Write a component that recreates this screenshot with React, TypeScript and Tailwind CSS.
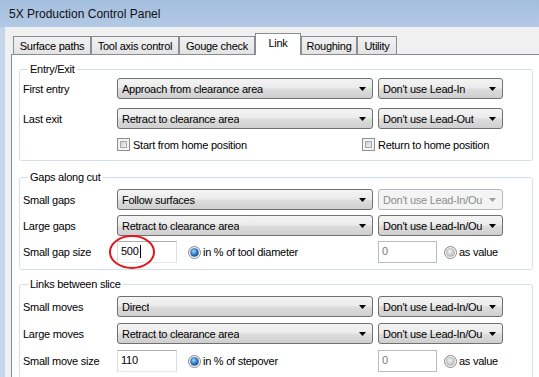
import React from "react";

const F = "font-['Liberation_Sans',Arial,sans-serif] text-[11px] tracking-[-0.25px] leading-[14px] text-black";

function Arrow({ disabled = false }: { disabled?: boolean }) {
  return (
    <svg width="7" height="4" viewBox="0 0 7 4" className="shrink-0">
      <polygon points="0,0 7,0 3.5,4" fill={disabled ? "#a0a0a0" : "#000"} />
    </svg>
  );
}

function Select({ text, w, disabled = false, clip = false }: { text: string; w: string; disabled?: boolean; clip?: boolean }) {
  return (
    <div
      className={
        disabled
          ? `${w} h-[21px] flex items-center justify-between pl-[4px] pr-[6px] rounded-[3px] border border-[#b5b8bc] bg-[#f4f4f4] text-[#8d8d8d] overflow-hidden whitespace-nowrap`
          : `${w} h-[21px] flex items-center justify-between pl-[4px] pr-[6px] rounded-[3px] border border-[#707070] bg-[linear-gradient(#f4f4f4_0%,#ebebeb_48%,#dddddd_52%,#cfcfcf_100%)] overflow-hidden whitespace-nowrap`
      }
    >
      <span className={clip ? "w-[99px] overflow-hidden whitespace-nowrap" : "overflow-hidden"}>{text}</span>
      <Arrow disabled={disabled} />
    </div>
  );
}

function Checkbox() {
  return (
    <div className="w-[13px] h-[13px] border border-[#8e8f8f] bg-[#f4f4f4] p-[2px] shrink-0">
      <div className="w-full h-full border border-[#a7a9ac] bg-[linear-gradient(135deg,#c9ccd1_0%,#e4e5e7_60%,#f3f3f3_100%)]" />
    </div>
  );
}

function Radio({ on }: { on: boolean }) {
  return (
    <svg width="13" height="13" viewBox="0 0 13 13" className="shrink-0">
      <defs>
        <linearGradient id="rg_outer" x1="0" y1="0" x2="1" y2="1">
          <stop offset="0" stopColor="#e8e8e8" />
          <stop offset="1" stopColor="#ffffff" />
        </linearGradient>
        <radialGradient id="rg_on" cx="0.4" cy="0.35" r="0.7">
          <stop offset="0" stopColor="#a9e0ff" />
          <stop offset="0.5" stopColor="#3b8ad6" />
          <stop offset="1" stopColor="#14428a" />
        </radialGradient>
        <radialGradient id="rg_off" cx="0.4" cy="0.35" r="0.7">
          <stop offset="0" stopColor="#f4f4f4" />
          <stop offset="1" stopColor="#b8b8b8" />
        </radialGradient>
      </defs>
      <circle cx="6.5" cy="6.5" r="6" fill="url(#rg_outer)" stroke="#8a8a8a" strokeWidth="1" />
      <circle cx="6.5" cy="6.5" r="4" fill={on ? "url(#rg_on)" : "url(#rg_off)"} stroke={on ? "#2a5f9e" : "#a6a6a6"} strokeWidth="0.6" />
    </svg>
  );
}

function TextBox({ value, w, disabled = false, cursor = false }: { value: string; w: string; disabled?: boolean; cursor?: boolean }) {
  return (
    <div
      className={
        disabled
          ? `${w} h-[22px] border border-[#b9bcc1] bg-white pl-[3px] pt-[2px] text-[#7a7a7a] shrink-0`
          : `${w} h-[22px] border border-[#abadb3] border-l-[#dbdfe6] border-r-[#dbdfe6] border-b-[#e3e9ef] bg-white pl-[3px] pt-[2px] shrink-0 flex items-start`
      }
    >
      <span>{value}</span>
      {cursor && <span className="inline-block w-px h-[13px] bg-black ml-px mt-[1px]" />}
    </div>
  );
}

function Row({ label, children, className = "" }: { label: string; children: React.ReactNode; className?: string }) {
  return (
    <div className={`flex items-center ${className}`}>
      <div className="w-[94px] shrink-0 whitespace-nowrap">{label}</div>
      {children}
    </div>
  );
}

function SizeRow({ label, value, unit, cursor = false, className = "" }: { label: string; value: string; unit: string; cursor?: boolean; className?: string }) {
  return (
    <Row label={label} className={className}>
      <div className="w-[261px] flex items-center shrink-0">
        <TextBox value={value} w="w-[60px]" cursor={cursor} />
        <div className="ml-[11px]">
          <Radio on={true} />
        </div>
        <span className="ml-[2px] whitespace-nowrap">{unit}</span>
      </div>
      <TextBox value="0" w="w-[59px]" disabled />
      <div className="ml-[7px]">
        <Radio on={false} />
      </div>
      <span className="ml-[2px] whitespace-nowrap">as value</span>
    </Row>
  );
}

function Group({ title, children, className = "" }: { title: string; children: React.ReactNode; className?: string }) {
  return (
    <fieldset className={`w-[514px] border border-[#d5dfe5] rounded-[3px] pl-[3px] ${className}`}>
      <legend className="ml-[5px] px-[2px]">{title}</legend>
      {children}
    </fieldset>
  );
}

const tabs = [
  { name: "Surface paths", w: "w-[78px]" },
  { name: "Tool axis control", w: "w-[88px]" },
  { name: "Gouge check", w: "w-[76px]" },
  { name: "Link", w: "w-[46px]", active: true },
  { name: "Roughing", w: "w-[56px]" },
  { name: "Utility", w: "w-[40px]" },
];

export default function App() {
  return (
    <div className={`relative w-[539px] h-[377px] overflow-hidden bg-[#f0f0f0] flex flex-col ${F}`}>
      <div className="h-[27px] shrink-0 bg-[linear-gradient(#a3bddd,#b3cae6)] flex items-center pl-[9px] text-[12px] tracking-normal text-[#111]">
        5X Production Control Panel
      </div>
      <div className="flex flex-1">
        <div className="w-[5px] bg-[#c4d6ec] shrink-0" />
        <div className="flex-1 pl-[6px] flex flex-col">
          <div className="h-[27px] flex items-end pl-[2px] shrink-0">
            {tabs.map((t) =>
              t.active ? (
                <div
                  key={t.name}
                  className={`${t.w} h-[22px] -mb-px relative z-10 bg-white border border-b-0 border-[#898c95] flex justify-center pt-[2px] shrink-0`}
                >
                  {t.name}
                </div>
              ) : (
                <div
                  key={t.name}
                  className={`${t.w} h-[18px] border border-b-0 border-[#898c95] bg-[linear-gradient(#f2f2f2,#e3e3e3)] flex justify-center pt-[2px] shrink-0`}
                >
                  {t.name}
                </div>
              )
            )}
          </div>
          <div className="w-[540px] flex-1 bg-white border-t border-l border-[#898c95] pl-[7px] flex flex-col">
            <Group title="Entry/Exit" className="mt-[7px] pt-[2px] pb-[9px]">
              <Row label="First entry">
                <Select text="Approach from clearance area" w="w-[256px]" />
                <div className="ml-[5px]">
                  <Select text="Don't use Lead-In" w="w-[125px]" />
                </div>
              </Row>
              <Row label="Last exit" className="mt-[9px]">
                <Select text="Retract to clearance area" w="w-[256px]" />
                <div className="ml-[5px]">
                  <Select text="Don't use Lead-Out" w="w-[125px]" />
                </div>
              </Row>
              <div className="flex items-center mt-[9px] h-[13px]">
                <div className="w-[94px] shrink-0" />
                <Checkbox />
                <span className="ml-[3px] w-[229px] whitespace-nowrap">Start from home position</span>
                <Checkbox />
                <span className="ml-[3px] whitespace-nowrap">Return to home position</span>
              </div>
            </Group>
            <Group title="Gaps along cut" className="mt-[9px] pt-[5px] pb-[6px]">
              <Row label="Small gaps">
                <Select text="Follow surfaces" w="w-[256px]" />
                <div className="ml-[5px]">
                  <Select text="Don't use Lead-In/Out" w="w-[125px]" disabled clip />
                </div>
              </Row>
              <Row label="Large gaps" className="mt-[5px]">
                <Select text="Retract to clearance area" w="w-[256px]" />
                <div className="ml-[5px]">
                  <Select text="Don't use Lead-In/Out" w="w-[125px]" clip />
                </div>
              </Row>
              <SizeRow label="Small gap size" value="500" unit="in % of tool diameter" cursor className="mt-[5px]" />
            </Group>
            <Group title="Links between slice" className="mt-[7px] pt-[5px] pb-[6px]">
              <Row label="Small moves">
                <Select text="Direct" w="w-[256px]" />
                <div className="ml-[5px]">
                  <Select text="Don't use Lead-In/Out" w="w-[125px]" clip />
                </div>
              </Row>
              <Row label="Large moves" className="mt-[6px]">
                <Select text="Retract to clearance area" w="w-[256px]" />
                <div className="ml-[5px]">
                  <Select text="Don't use Lead-In/Out" w="w-[125px]" clip />
                </div>
              </Row>
              <SizeRow label="Small move size" value="110" unit="in % of stepover" className="mt-[6px]" />
            </Group>
          </div>
        </div>
      </div>
      <svg className="absolute left-[108px] top-[234px]" width="50" height="37" viewBox="0 0 50 37">
        <ellipse cx="24" cy="18" rx="22" ry="16" fill="none" stroke="#e3161b" strokeWidth="2" />
      </svg>
    </div>
  );
}
